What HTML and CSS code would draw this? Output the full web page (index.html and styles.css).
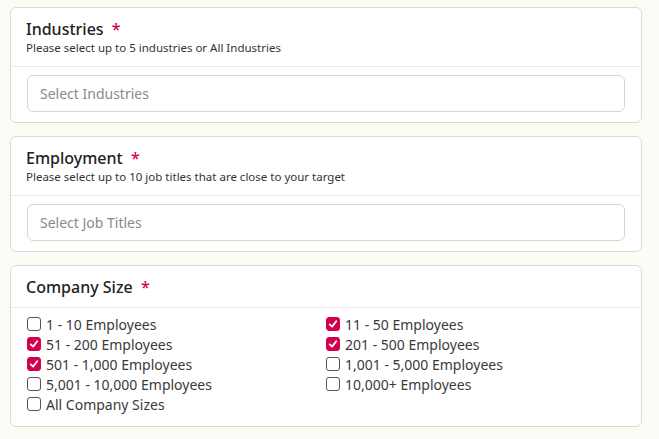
FILE: index.html
```html
<!DOCTYPE html>
<html>
<head>
<meta charset="utf-8">
<link rel="stylesheet" href="styles.css">
</head>
<body>
<div class="page">
  <section class="card">
    <header class="card-head">
      <div class="title">Industries <span class="req">*</span></div>
      <div class="sub">Please select up to 5 industries or All Industries</div>
    </header>
    <div class="card-body">
      <div class="input">Select Industries</div>
    </div>
  </section>
  <section class="card">
    <header class="card-head">
      <div class="title">Employment <span class="req">*</span></div>
      <div class="sub">Please select up to 10 job titles that are close to your target</div>
    </header>
    <div class="card-body">
      <div class="input">Select Job Titles</div>
    </div>
  </section>
  <section class="card">
    <header class="card-head single">
      <div class="title">Company Size <span class="req">*</span></div>
    </header>
    <div class="card-body checks">
      <label class="check"><span class="box"></span>1 - 10 Employees</label>
      <label class="check"><span class="box on"><svg viewBox="0 0 14 14"><path d="M3.2 7.4 L5.9 10 L10.8 3.8" fill="none" stroke="#fff" stroke-width="2.1" stroke-linecap="round" stroke-linejoin="round"/></svg></span>11 - 50 Employees</label>
      <label class="check"><span class="box on"><svg viewBox="0 0 14 14"><path d="M3.2 7.4 L5.9 10 L10.8 3.8" fill="none" stroke="#fff" stroke-width="2.1" stroke-linecap="round" stroke-linejoin="round"/></svg></span>51 - 200 Employees</label>
      <label class="check"><span class="box on"><svg viewBox="0 0 14 14"><path d="M3.2 7.4 L5.9 10 L10.8 3.8" fill="none" stroke="#fff" stroke-width="2.1" stroke-linecap="round" stroke-linejoin="round"/></svg></span>201 - 500 Employees</label>
      <label class="check"><span class="box on"><svg viewBox="0 0 14 14"><path d="M3.2 7.4 L5.9 10 L10.8 3.8" fill="none" stroke="#fff" stroke-width="2.1" stroke-linecap="round" stroke-linejoin="round"/></svg></span>501 - 1,000 Employees</label>
      <label class="check"><span class="box"></span>1,001 - 5,000 Employees</label>
      <label class="check"><span class="box"></span>5,001 - 10,000 Employees</label>
      <label class="check"><span class="box"></span>10,000+ Employees</label>
      <label class="check"><span class="box"></span>All Company Sizes</label>
    </div>
  </section>
</div>
</body>
</html>
```
FILE: styles.css
```css
html, body {
  margin: 0;
  padding: 0;
  background: #fcfbf5;
  font-family: "Noto Sans", "Open Sans", sans-serif;
  color: #2a2a2a;
}
.page {
  width: 632px;
  padding: 7px 0 0 10px;
  display: flex;
  flex-direction: column;
  gap: 13px;
}
.card {
  background: #fff;
  border: 1px solid #dddbd3;
  border-radius: 6px;
}
.card-head {
  padding: 11px 15px 9px;
  border-bottom: 1px solid #ecebe6;
}
.card-head.single {
  padding: 11px 15px 10px;
}
.title {
  font-size: 16px;
  line-height: 20px;
  font-weight: 500;
  color: #222;
}
.req {
  color: #d4004f;
  margin-left: 4px;
}
.sub {
  font-size: 11.5px;
  line-height: 18px;
  color: #333;
}
.card-body {
  padding: 8px 16px 10px;
}
.input {
  height: 35px;
  border: 1px solid #d8d6ce;
  border-radius: 6px;
  padding: 0 12px;
  display: flex;
  align-items: center;
  font-size: 14px;
  color: #8a8a8a;
}
.checks {
  display: grid;
  grid-template-columns: 1fr 1fr;
  padding: 6px 16px 12px;
}
.check {
  display: flex;
  align-items: center;
  height: 20px;
  font-size: 14px;
  color: #3a3a3a;
}
.box {
  width: 12px;
  height: 12px;
  border: 1px solid #555;
  border-radius: 3px;
  margin-right: 5px;
  display: flex;
  align-items: center;
  justify-content: center;
  flex: none;
}
.box.on {
  background: #d4004f;
  border-color: #d4004f;
}
.box svg {
  width: 14px;
  height: 14px;
}
```
